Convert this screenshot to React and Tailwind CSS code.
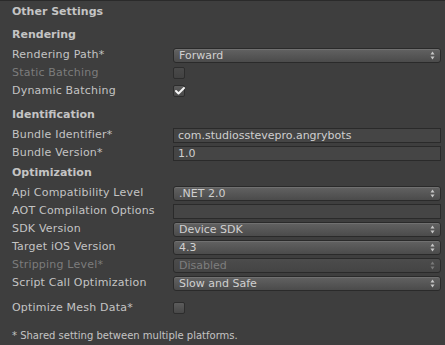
import { Check } from "lucide-react";

function Arrows({ dim }) {
  const c = dim ? "#7a7a7a" : "#c8c8c8";
  return (
    <svg width="5" height="9" viewBox="0 0 5 9" className="shrink-0">
      <path d="M2.5 0.5 L4.5 3.5 L0.5 3.5 Z" fill={c} />
      <path d="M2.5 8.5 L4.5 5.5 L0.5 5.5 Z" fill={c} />
    </svg>
  );
}

function Dropdown({ value, disabled }) {
  return (
    <div
      className={
        "flex-1 h-[15px] flex items-center justify-between pl-[5px] pr-[5px] rounded-[3px] border border-[#2a2a2a] " +
        (disabled
          ? "bg-gradient-to-b from-[#4c4c4c] to-[#444444] text-[#7e7e7e]"
          : "bg-gradient-to-b from-[#626262] to-[#4b4b4b] text-[#d0d0d0] shadow-[inset_0_1px_0_#707070]")
      }
    >
      <span className="leading-none">{value}</span>
      <Arrows dim={disabled} />
    </div>
  );
}

function TextField({ value }) {
  return (
    <div className="flex-1 h-[15px] flex items-center pl-[4px] border border-[#2a2a2a] bg-[#454545] text-[#cfcfcf] leading-none">
      {value}
    </div>
  );
}

function Checkbox({ checked, disabled }) {
  return (
    <div
      className={
        "relative w-[12px] h-[12px] rounded-[2px] border border-[#2d2d2d] " +
        (disabled
          ? "bg-gradient-to-b from-[#4a4a4a] to-[#424242]"
          : "bg-gradient-to-b from-[#5c5c5c] to-[#484848]")
      }
    >
      {checked && (
        <Check size={12} strokeWidth={4} color="#f4f4f4" className="absolute left-[0px] top-[-1px]" />
      )}
    </div>
  );
}

function Row({ label, disabled, children, className = "" }) {
  return (
    <div className={"flex h-[18px] items-center " + className}>
      <div className={"w-[161px] shrink-0 tracking-[0.2px] " + (disabled ? "text-[#7c7c7c]" : "text-[#c4c4c4]")}>
        {label}
      </div>
      <div className="flex-1 flex items-center">{children}</div>
    </div>
  );
}

function Section({ title, className = "" }) {
  return (
    <div className={"h-[22px] flex items-center font-bold text-[#c4c4c4] " + className}>
      {title}
    </div>
  );
}

export default function App() {
  return (
    <div
      className="w-[445px] h-[345px] bg-[#3e3e3e] border-t border-[#2a2a2a] overflow-hidden text-[11px] pl-[12px] pr-[4px]"
      style={{ fontFamily: '"DejaVu Sans", Verdana, sans-serif' }}
    >
      <div className="h-[23px] flex items-center font-bold text-[#c4c4c4]">Other Settings</div>

      <Section title="Rendering" />
      <Row label="Rendering Path*">
        <Dropdown value="Forward" />
      </Row>
      <Row label="Static Batching" disabled>
        <Checkbox disabled />
      </Row>
      <Row label="Dynamic Batching">
        <Checkbox checked />
      </Row>

      <Section title="Identification" className="mt-[4px]" />
      <Row label="Bundle Identifier*">
        <TextField value="com.studiosstevepro.angrybots" />
      </Row>
      <Row label="Bundle Version*">
        <TextField value="1.0" />
      </Row>

      <Section title="Optimization" />
      <Row label="Api Compatibility Level">
        <Dropdown value=".NET 2.0" />
      </Row>
      <Row label="AOT Compilation Options">
        <TextField value="" />
      </Row>
      <Row label="SDK Version">
        <Dropdown value="Device SDK" />
      </Row>
      <Row label="Target iOS Version">
        <Dropdown value="4.3" />
      </Row>
      <Row label="Stripping Level*" disabled>
        <Dropdown value="Disabled" disabled />
      </Row>
      <Row label="Script Call Optimization">
        <Dropdown value="Slow and Safe" />
      </Row>

      <Row label="Optimize Mesh Data*" className="mt-[7px]">
        <Checkbox />
      </Row>

      <div className="h-[18px] mt-[9px] flex items-center text-[10px] text-[#c4c4c4]">
        * Shared setting between multiple platforms.
      </div>
    </div>
  );
}
